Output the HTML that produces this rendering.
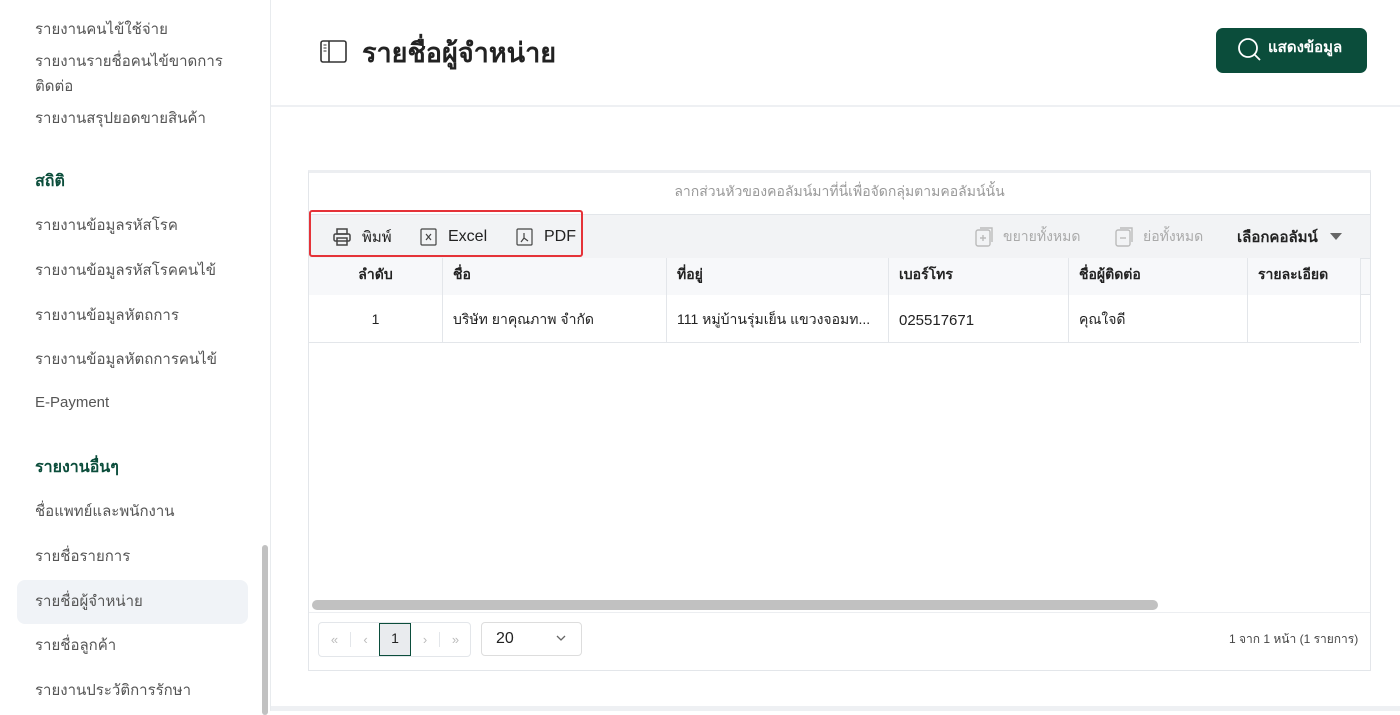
<!DOCTYPE html>
<html><head><meta charset="utf-8"><style>
*{box-sizing:border-box;margin:0;padding:0}
body{width:1400px;height:711px;overflow:hidden;background:#fff;font-family:"Liberation Sans","Noto Sans CJK SC",sans-serif;position:relative;color:#222}
.a{position:absolute;white-space:nowrap}
.side{position:absolute;left:0;top:0;width:271px;height:711px;border-right:1px solid #e8ebee}
.si{position:absolute;left:35px;font-size:15px;color:#555;margin-top:-3px}
.sh{position:absolute;left:35px;font-size:16px;font-weight:bold;color:#0b4d3b;margin-top:-3px}
.th{position:absolute;top:258px;height:37px;border-right:1px solid #e3e6ea;font-size:14px;font-weight:bold;line-height:33px;padding-left:10px;background:#f7f8fa}
.td{position:absolute;top:295px;height:48px;border-right:1px solid #e3e6ea;font-size:14px;line-height:48px;padding-left:10px}
</style></head><body>
<div class="side">
<div class="si" style="top:20px">รายงานคนไข้ใช้จ่าย</div>
<div class="si" style="top:52px">รายงานรายชื่อคนไข้ขาดการ</div>
<div class="si" style="top:77px">ติดต่อ</div>
<div class="si" style="top:109px">รายงานสรุปยอดขายสินค้า</div>
<div class="sh" style="top:172px">สถิติ</div>
<div class="si" style="top:216px">รายงานข้อมูลรหัสโรค</div>
<div class="si" style="top:261px">รายงานข้อมูลรหัสโรคคนไข้</div>
<div class="si" style="top:306px">รายงานข้อมูลหัตถการ</div>
<div class="si" style="top:350px">รายงานข้อมูลหัตถการคนไข้</div>
<div class="si" style="top:397px">E-Payment</div>
<div class="sh" style="top:458px">รายงานอื่นๆ</div>
<div class="si" style="top:502px">ชื่อแพทย์และพนักงาน</div>
<div class="si" style="top:547px">รายชื่อรายการ</div>
<div style="position:absolute;left:17px;top:580px;width:231px;height:44px;background:#f0f3f7;border-radius:8px"></div>
<div class="si" style="top:592px">รายชื่อผู้จำหน่าย</div>
<div class="si" style="top:636px">รายชื่อลูกค้า</div>
<div class="si" style="top:681px">รายงานประวัติการรักษา</div>
<div style="position:absolute;left:262px;top:545px;width:6px;height:170px;background:#c1c1c1;border-radius:3px"></div>
</div>
<div style="position:absolute;left:271px;top:105px;width:1129px;height:2px;background:#eef0f3"></div>
<svg class="a" style="left:320px;top:40px" width="28" height="24" viewBox="0 0 28 24"><rect x="1" y="1" width="25" height="21" rx="2" fill="none" stroke="#333" stroke-width="1.6"/><line x1="9" y1="1" x2="9" y2="22" stroke="#333" stroke-width="1.6"/><line x1="3.5" y1="5" x2="6.5" y2="5" stroke="#333"/><line x1="3.5" y1="8" x2="6.5" y2="8" stroke="#333"/><line x1="3.5" y1="11" x2="6.5" y2="11" stroke="#333"/></svg>
<div class="a" style="left:362px;top:31px;font-size:27px;font-weight:bold;color:#222">รายชื่อผู้จำหน่าย</div>
<div class="a" style="left:1216px;top:28px;width:151px;height:45px;background:#0b4d3b;border-radius:7px;color:#fff;font-size:15px;font-weight:bold;line-height:40px;padding-left:52px">แสดงข้อมูล</div>
<svg class="a" style="left:1237px;top:37px" width="26" height="26" viewBox="0 0 26 26"><circle cx="11" cy="11" r="9" fill="none" stroke="#fff" stroke-width="1.8"/><line x1="17.5" y1="17.5" x2="23" y2="23" stroke="#fff" stroke-width="1.8"/></svg>
<div style="position:absolute;left:308px;top:170px;width:1063px;height:501px;border:1px solid #e3e6ea;border-top:3px solid #eceef1"></div>
<div class="a" style="left:308px;top:181px;width:1063px;text-align:center;font-size:14px;color:#999">ลากส่วนหัวของคอลัมน์มาที่นี่เพื่อจัดกลุ่มตามคอลัมน์นั้น</div>
<div style="position:absolute;left:309px;top:214px;width:1061px;height:44px;background:#f2f3f5;border-top:1px solid #e3e6ea"></div>
<div style="position:absolute;left:309px;top:210px;width:274px;height:47px;border:2.5px solid #e53238;border-radius:3px"></div>
<svg class="a" style="left:332px;top:227px" width="20" height="20" viewBox="0 0 20 20" fill="none" stroke="#444" stroke-width="1.5"><rect x="5" y="2" width="10" height="5"/><rect x="2" y="7" width="16" height="7" rx="1.5"/><rect x="5" y="11" width="10" height="7"/></svg>
<div class="a" style="left:362px;top:225px;font-size:15px">พิมพ์</div>
<svg class="a" style="left:420px;top:228px" width="18" height="18" viewBox="0 0 18 18" fill="none" stroke="#444" stroke-width="1.2"><rect x="1" y="1" width="15" height="16" rx="1"/><path d="M6 6l5 6M11 6l-5 6"/></svg>
<div class="a" style="left:448px;top:228px;font-size:16px">Excel</div>
<svg class="a" style="left:516px;top:228px" width="18" height="18" viewBox="0 0 18 18" fill="none" stroke="#444" stroke-width="1.2"><rect x="1" y="1" width="15" height="16" rx="1"/><path d="M8 5v5l-3 4M8 10l4 3"/></svg>
<div class="a" style="left:544px;top:228px;font-size:16px">PDF</div>
<svg class="a" style="left:975px;top:226px" width="20" height="22" viewBox="0 0 20 22" fill="none" stroke="#bbb" stroke-width="1.4"><rect x="1" y="4" width="14" height="16" rx="2"/><path d="M5 2h12v14"/><path d="M8 9v6M5 12h6"/></svg>
<div class="a" style="left:1003px;top:226px;font-size:14px;color:#aaa">ขยายทั้งหมด</div>
<svg class="a" style="left:1115px;top:226px" width="20" height="22" viewBox="0 0 20 22" fill="none" stroke="#bbb" stroke-width="1.4"><rect x="1" y="4" width="14" height="16" rx="2"/><path d="M5 2h12v14"/><path d="M5 12h6"/></svg>
<div class="a" style="left:1143px;top:226px;font-size:14px;color:#aaa">ย่อทั้งหมด</div>
<div class="a" style="left:1237px;top:225px;font-size:15px;font-weight:bold;color:#222">เลือกคอลัมน์</div>
<div class="a" style="left:1330px;top:233px;width:0;height:0;border-left:6px solid transparent;border-right:6px solid transparent;border-top:7px solid #666"></div>
<div style="position:absolute;left:309px;top:258px;width:1061px;height:37px;background:#f7f8fa;border-top:1px solid #e3e6ea;border-bottom:1px solid #e3e6ea"></div>
<div class="th" style="left:309px;width:134px;text-align:center;padding:0">ลำดับ</div>
<div class="th" style="left:443px;width:224px">ชื่อ</div>
<div class="th" style="left:667px;width:222px">ที่อยู่</div>
<div class="th" style="left:889px;width:180px">เบอร์โทร</div>
<div class="th" style="left:1069px;width:179px">ชื่อผู้ติดต่อ</div>
<div class="th" style="left:1248px;width:113px">รายละเอียด</div>
<div style="position:absolute;left:309px;top:342px;width:1050px;height:1px;background:#e3e6ea"></div>
<div class="td" style="left:309px;width:134px;text-align:center;padding:0">1</div>
<div class="td" style="left:443px;width:224px">บริษัท ยาคุณภาพ จำกัด</div>
<div class="td" style="left:667px;width:222px">111 หมู่บ้านรุ่มเย็น แขวงจอมท...</div>
<div class="td" style="left:889px;width:180px;font-size:15px;line-height:52px">025517671</div>
<div class="td" style="left:1069px;width:179px">คุณใจดี</div>
<div class="td" style="left:1248px;width:113px"></div>
<div style="position:absolute;left:312px;top:600px;width:846px;height:10px;background:#c1c1c1;border-radius:5px"></div>
<div style="position:absolute;left:309px;top:612px;width:1061px;height:1px;background:#eceef1"></div>
<div style="position:absolute;left:318px;top:622px;width:153px;height:35px;border:1px solid #e3e6ea;border-radius:4px"></div>
<div class="a" style="left:318px;top:632px;width:33px;text-align:center;color:#bbb;font-size:13px">«</div>
<div class="a" style="left:350px;top:632px;width:30px;text-align:center;color:#bbb;font-size:13px;border-left:1px solid #e3e6ea">‹</div>
<div class="a" style="left:379px;top:623px;width:32px;height:33px;background:#e9ebee;border:1px solid #0b4d3b;text-align:center;font-size:14px;line-height:28px">1</div>
<div class="a" style="left:411px;top:632px;width:28px;text-align:center;color:#bbb;font-size:13px">›</div>
<div class="a" style="left:439px;top:632px;width:32px;text-align:center;color:#bbb;font-size:13px;border-left:1px solid #e3e6ea">»</div>
<div class="a" style="left:481px;top:622px;width:101px;height:34px;border:1px solid #ddd;border-radius:4px;font-size:16px;line-height:32px;padding-left:14px">20</div>
<svg class="a" style="left:555px;top:634px" width="12" height="8" viewBox="0 0 12 8"><path d="M2 2l4 4 4-4" fill="none" stroke="#666" stroke-width="1.3"/></svg>
<div class="a" style="left:1229px;top:630px;font-size:12px;color:#444">1 จาก 1 หน้า (1 รายการ)</div>
<div style="position:absolute;left:271px;top:706px;width:1129px;height:5px;background:#eef0f3"></div>
</body></html>
